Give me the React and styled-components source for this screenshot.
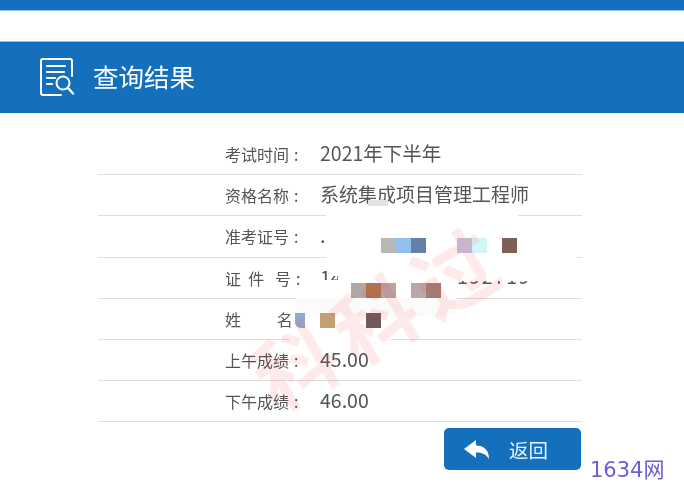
import React from 'react'
import styled, { createGlobalStyle } from 'styled-components'

const GlobalStyle = createGlobalStyle`
  html, body {
    margin: 0;
    padding: 0;
    background: #fff;
    font-family: "Noto Sans CJK SC", "Liberation Sans", sans-serif;
  }
`

const rows = [
  { label: '考试时间', value: '2021年下半年', colon: true },
  { label: '资格名称', value: '系统集成项目管理工程师', colon: true, narrow: true },
  { label: '准考证号', value: '.', colon: true },
  { label: '证  件   号', value: '14', colon: true },
  { label: '姓          名', value: '' },
  { label: '上午成绩', value: '45.00', colon: true },
  { label: '下午成绩', value: '46.00', colon: true },
]

// white patches and mosaic blocks that hide the personal data, table coordinates
const masks = [
  { x: 228, y: 70, w: 192, h: 12, c: '#fff' },
  { x: 270, y: 66, w: 20, h: 6, c: '#e2e2de' },
  { x: 228, y: 82, w: 250, h: 42, c: '#fff' },
  { x: 240, y: 124, w: 117, h: 40, c: '#fff' },
  { x: 355, y: 124, w: 90, h: 23, c: '#fff' },
  { x: 232, y: 130, w: 10, h: 12, c: '#fff' },
  { x: 205, y: 146, w: 150, h: 18, c: '#fff' },
  { x: 198, y: 164, w: 160, h: 18, c: '#fbfbfb' },
  { x: 192, y: 204, w: 100, h: 3, c: '#fff' },
]

const blocks = [
  { x: 283, y: 104, c: '#b8b8b8' },
  { x: 298, y: 104, c: '#8fc0ee' },
  { x: 313, y: 104, c: '#6480a6' },
  { x: 359, y: 104, c: '#c4c5de' },
  { x: 374, y: 104, c: '#d3f6f8' },
  { x: 404, y: 104, c: '#7d5f55' },
  { x: 253, y: 149, c: '#b0a8a8' },
  { x: 268, y: 149, c: '#b0734f' },
  { x: 283, y: 149, c: '#b8a4a4' },
  { x: 313, y: 149, c: '#bba6a8' },
  { x: 328, y: 149, c: '#9c8078' },
  { x: 222, y: 179, c: '#c4a072' },
  { x: 268, y: 179, c: '#6e5a5c' },
]

function ResultIcon() {
  return (
    <svg width="36" height="40" viewBox="0 0 36 40" fill="none" stroke="#fff" strokeWidth="2" strokeLinecap="round" strokeLinejoin="round">
      <path d="M22 37H4a2 2 0 0 1-2-2V3a2 2 0 0 1 2-2h27a2 2 0 0 1 2 2v15" />
      <path d="M8 8h18M8 14h17M8 20h8M8 26h5" strokeWidth="2.2" />
      <circle cx="24" cy="25" r="6.5" />
      <path d="M29 30l5 5.5" strokeWidth="2.4" />
    </svg>
  )
}

function BackIcon() {
  return (
    <svg width="25" height="19" viewBox="0 0 25 19">
      <path d="M0 9 L12 0 V5.5 C20 5.5 25 10 25 19 C22 14 18 12.5 12 12.5 V18 Z" fill="#fff" />
    </svg>
  )
}

export default function App() {
  return (
    <Page>
      <GlobalStyle />
      <TopBar />
      <Banner>
        <ResultIcon />
        <Title>查询结果</Title>
      </Banner>
      <Table>
        {rows.map((row) => (
          <Row key={row.label}>
            <Label>
              {row.label}
              {row.colon && <Colon>:</Colon>}
            </Label>
            <Value $narrow={row.narrow}>{row.value}</Value>
          </Row>
        ))}
        <PartialNumber>192719</PartialNumber>
        {masks.map((m, i) => (
          <Mask key={i} $x={m.x} $y={m.y} $w={m.w} $h={m.h} $c={m.c} />
        ))}
        {blocks.map((b, i) => (
          <Block key={i} $x={b.x} $y={b.y} $c={b.c} />
        ))}
        <NameEdge />
        <Watermark>科科过</Watermark>
      </Table>
      <Footer>
        <BackButton>
          <BackIcon />
          <span>返回</span>
        </BackButton>
      </Footer>
      <SiteMark>1634网</SiteMark>
    </Page>
  )
}

const Page = styled.div`
  position: relative;
  width: 684px;
  height: 486px;
  overflow: hidden;
  background: #fff;
  filter: blur(0.35px);
`

const TopBar = styled.div`
  height: 10px;
  background: #1470bc;
  border-bottom: 1px solid #8cc0e6;
`

const Banner = styled.div`
  margin-top: 30px;
  height: 71px;
  background: #1470bc;
  border-top: 1px solid #8cc0e6;
  display: flex;
  align-items: center;
  padding-left: 39px;
  gap: 18px;
`

const Title = styled.div`
  color: #fff;
  font-size: 25.5px;
  line-height: 1;
  margin-bottom: 3px;
`

const Table = styled.div`
  position: relative;
  width: 484px;
  margin: 21px 0 0 98px;
`

const Row = styled.div`
  height: 41.2px;
  box-sizing: border-box;
  border-bottom: 1px solid #dedede;
  display: grid;
  grid-template-columns: 222px 1fr;
  align-items: center;
`

const Label = styled.div`
  padding-left: 127px;
  font-size: 16px;
  color: #555;
  white-space: pre;
`

const Colon = styled.span`
  margin-left: 5px;
`

const Value = styled.div`
  font-size: ${(p) => (p.$narrow ? '19px' : '19.5px')};
  color: #555;
  white-space: nowrap;
  padding-bottom: 3px;
`

const PartialNumber = styled.div`
  position: absolute;
  left: 359px;
  top: 132px;
  font-size: 19.5px;
  line-height: 20px;
  color: #555;
  letter-spacing: 1.5px;
`

const Mask = styled.div`
  position: absolute;
  left: ${(p) => p.$x}px;
  top: ${(p) => p.$y}px;
  width: ${(p) => p.$w}px;
  height: ${(p) => p.$h}px;
  background: ${(p) => p.$c};
`

const Block = styled.div`
  position: absolute;
  left: ${(p) => p.$x}px;
  top: ${(p) => p.$y}px;
  width: 15px;
  height: 15px;
  background: ${(p) => p.$c};
`

const NameEdge = styled.div`
  position: absolute;
  left: 197px;
  top: 179px;
  width: 10px;
  height: 15px;
  background: #8aaed0;
  border-bottom-left-radius: 6px;
`

const Watermark = styled.div`
  position: absolute;
  left: 130px;
  top: 139px;
  width: 300px;
  text-align: center;
  font-size: 82px;
  font-weight: 700;
  line-height: 1;
  letter-spacing: 10px;
  white-space: nowrap;
  color: rgba(245, 50, 50, 0.1);
  transform: rotate(-30deg);
  pointer-events: none;
`

const Footer = styled.div`
  display: flex;
  justify-content: flex-end;
  width: 581px;
  margin-top: 6px;
`

const BackButton = styled.div`
  width: 137px;
  height: 42px;
  box-sizing: border-box;
  background: #1470bc;
  border-radius: 5px;
  display: flex;
  align-items: center;
  padding-left: 20px;
  gap: 20px;
  color: #e8f3fb;
  font-size: 19.5px;
`

const SiteMark = styled.div`
  position: absolute;
  left: 590px;
  top: 456px;
  font-family: "DejaVu Sans", "Noto Sans CJK SC", sans-serif;
  font-size: 21px;
  line-height: 28px;
  color: #6a5fd8;
`
